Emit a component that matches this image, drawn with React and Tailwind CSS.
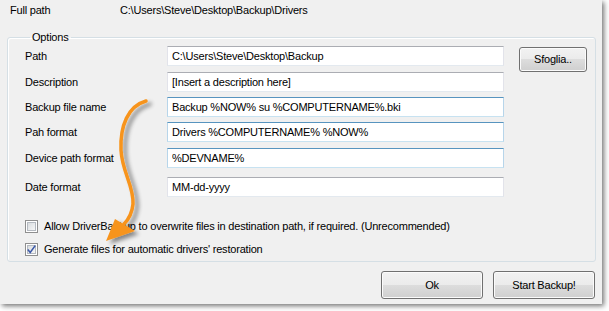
import { useState } from "react";

const font = "font-['Liberation_Sans',Arial,sans-serif]";

const rows = [
  { label: "Path", value: "C:\\Users\\Steve\\Desktop\\Backup", tone: "grey", mt: "mt-0" },
  { label: "Description", value: "[Insert a description here]", tone: "grey", mt: "mt-[6px]" },
  { label: "Backup file name", value: "Backup %NOW% su %COMPUTERNAME%.bki", tone: "blue", mt: "mt-[5px]" },
  { label: "Pah format", value: "Drivers %COMPUTERNAME% %NOW%", tone: "blue", mt: "mt-[5px]" },
  { label: "Device path format", value: "%DEVNAME%", tone: "blue", mt: "mt-[6px]" },
  { label: "Date format", value: "MM-dd-yyyy", tone: "grey", mt: "mt-[9px]" },
];

function WinButton({ children, className }) {
  return (
    <button
      type="button"
      className={`border border-[#707070] rounded-[3px] text-black text-[11px] tracking-[-0.2px] bg-[linear-gradient(to_bottom,#f2f2f2_0%,#ebebeb_50%,#dddddd_50%,#cfcfcf_100%)] shadow-[inset_0_0_0_1px_#fbfbfb] ${className}`}
    >
      {children}
    </button>
  );
}

function CheckBox({ checked, onToggle }) {
  return (
    <span
      onClick={onToggle}
      className="w-[13px] h-[13px] border border-[#8f8f8f] bg-white flex items-center justify-center shrink-0"
    >
      <span className="w-[9px] h-[9px] border border-[#b4b9c0] bg-[linear-gradient(135deg,#d9dcdf,#f7f7f7)] flex items-center justify-center">
        {checked && (
          <svg width="9" height="9" viewBox="0 0 9 9" className="overflow-visible">
            <path d="M0.8 4.6 L3.2 7.4 L8.2 0.6" fill="none" stroke="#3b58a8" strokeWidth="1.6" />
          </svg>
        )}
      </span>
    </span>
  );
}

export default function App() {
  const [overwrite, setOverwrite] = useState(false);
  const [generate, setGenerate] = useState(true);

  return (
    <div className={`w-[609px] h-[311px] bg-white ${font}`}>
      <div className="relative w-[602px] h-[304px] bg-[#f0f0f0] shadow-[2px_2px_5px_rgba(0,0,0,0.55)] text-[11px] tracking-[-0.2px] text-black flex flex-col">
        {/* full path */}
        <div className="h-[20px] flex items-center pl-[10px]">
          <span className="w-[110px]">Full path</span>
          <span>C:\Users\Steve\Desktop\Backup\Drivers</span>
        </div>

        {/* options group */}
        <fieldset className="mt-[11px] ml-[7px] w-[589px] border border-[#d5dfe5] rounded-[3px] pl-[17px] pb-[4px] shadow-[inset_1px_1px_0_#fff]">
          <legend className="ml-[5px] px-[2px] leading-[13px]">Options</legend>
          <div className="pt-[2px]">
            {rows.map((r, i) => (
              <div key={r.label} className={`h-[20px] flex items-center ${r.mt}`}>
                <span className="w-[142px]">{r.label}</span>
                <input
                  readOnly
                  defaultValue={r.value}
                  className={`w-[337px] h-[20px] bg-white pl-[4px] text-[11px] tracking-[-0.2px] outline-none border ${
                    r.tone === "blue"
                      ? "border-[#b7d5ea] border-t-[#5794bf] border-b-[#c7e2f1]"
                      : "border-[#e2e3ea] border-t-[#abadb3] border-b-[#e3e9ef]"
                  }`}
                />
                {i === 0 && (
                  <WinButton className="ml-[15px] w-[68px] h-[25px] self-start mt-[1px]">
                    Sfoglia..
                  </WinButton>
                )}
              </div>
            ))}
          </div>
          <div className="mt-[21px] h-[16px] flex items-center gap-[6px]">
            <CheckBox checked={overwrite} onToggle={() => setOverwrite(!overwrite)} />
            <span>
              Allow DriverBackup to overwrite files in destination path, if required. (Unrecommended)
            </span>
          </div>
          <div className="mt-[7px] h-[16px] flex items-center gap-[6px]">
            <CheckBox checked={generate} onToggle={() => setGenerate(!generate)} />
            <span>Generate files for automatic drivers' restoration</span>
          </div>
        </fieldset>

        {/* buttons */}
        <div className="mt-[9px] pr-[7px] flex justify-end gap-[10px]">
          <WinButton className="w-[102px] h-[28px]">Ok</WinButton>
          <WinButton className="w-[102px] h-[28px]">Start Backup!</WinButton>
        </div>

        {/* annotation arrow */}
        <svg
          className="absolute inset-0 pointer-events-none"
          width="602"
          height="304"
          viewBox="0 0 602 304"
        >
          <defs>
            <filter id="sh" x="-50%" y="-50%" width="200%" height="200%">
              <feGaussianBlur in="SourceAlpha" stdDeviation="2" />
              <feOffset dx="4" dy="3" result="b" />
              <feComponentTransfer>
                <feFuncA type="linear" slope="0.45" />
              </feComponentTransfer>
              <feMerge>
                <feMergeNode />
                <feMergeNode in="SourceGraphic" />
              </feMerge>
            </filter>
          </defs>
          <g filter="url(#sh)">
            <path
              d="M146 101 C128 106 120 126 121 150 C122 172 134 186 133 204 C132 214 128 220 124 224"
              fill="none"
              stroke="#f7941e"
              strokeWidth="3.5"
              strokeLinecap="round"
            />
            <path d="M106 241 L115 219 L135 231 Z" fill="#f7941e" />
          </g>
        </svg>
      </div>
    </div>
  );
}
